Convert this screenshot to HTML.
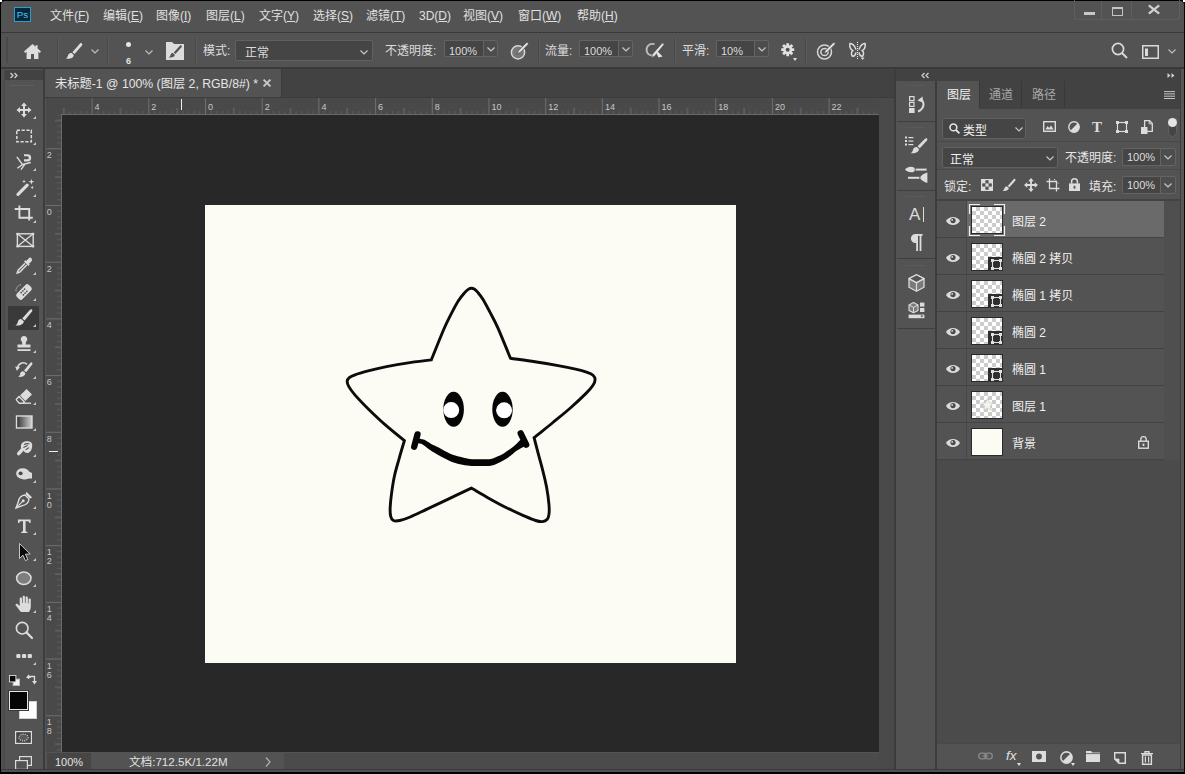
<!DOCTYPE html>
<html lang="zh-CN">
<head>
<meta charset="utf-8">
<title>Photoshop</title>
<style>
*{box-sizing:border-box;margin:0;padding:0}
html,body{width:1185px;height:774px;overflow:hidden;background:#000}
body{font-family:"Liberation Sans","Noto Sans CJK SC",sans-serif;font-size:12px;color:#dcdcdc;position:relative}
.abs{position:absolute}
#app{position:absolute;left:1px;top:1px;width:1183px;height:772px;background:#535353;border-radius:4px 4px 0 0;overflow:hidden}
.t{position:absolute;white-space:nowrap;line-height:16px}
.ln{position:absolute;background:#383838}
svg{position:absolute;overflow:visible}
.sep{position:absolute;top:5px;width:2px;height:25px;background:#484848;border-right:1px solid #5c5c5c}
.dd{position:absolute;background:#454545;border:1px solid #616161;border-radius:2px}
.inp{position:absolute;background:#454545;border:1px solid #636363;border-right:none;border-radius:2px 0 0 2px}
.chv{position:absolute;background:#4d4d4d;border:1px solid #636363;border-radius:0 2px 2px 0}
.n{font-size:11px}
.m{top:7px;font-size:12px;color:#e0e0e0}
.m u{text-decoration-thickness:1px;text-underline-offset:1px}
</style>
</head>
<body>
<div class="abs" style="left:0;top:0;width:2px;height:2px;background:#fff"></div><div class="abs" style="left:1183px;top:0;width:2px;height:2px;background:#fff"></div>
<div id="app"><div class="abs" style="left:0;top:68px;width:4px;height:704px;background:#505050;border-right:1px solid #484848"></div></div>

<!-- MENU BAR -->
<div id="menubar" class="abs" style="left:3px;top:1px;width:1180px;height:31px">
  <svg style="left:11px;top:6px" width="17" height="15" viewBox="0 0 18 16"><rect x="0.5" y="0.5" width="17" height="15" fill="#07283b" stroke="#2fa3d6" stroke-width="1"/><text x="9" y="12" font-family="Liberation Sans, sans-serif" font-size="10.5" fill="#4cc4ec" text-anchor="middle">Ps</text></svg>
  <span class="t m" style="left:47px">文件(<u>F</u>)</span>
  <span class="t m" style="left:100px">编辑(<u>E</u>)</span>
  <span class="t m" style="left:153px">图像(<u>I</u>)</span>
  <span class="t m" style="left:203px">图层(<u>L</u>)</span>
  <span class="t m" style="left:256px">文字(<u>Y</u>)</span>
  <span class="t m" style="left:310px">选择(<u>S</u>)</span>
  <span class="t m" style="left:363px">滤镜(<u>T</u>)</span>
  <span class="t m" style="left:416px">3D(<u>D</u>)</span>
  <span class="t m" style="left:460px">视图(<u>V</u>)</span>
  <span class="t m" style="left:515px">窗口(<u>W</u>)</span>
  <span class="t m" style="left:574px">帮助(<u>H</u>)</span>
  <!-- window controls -->
  <div class="abs" style="left:1071px;top:-1px;width:106px;height:20px;border:1px solid #5e5e5e;border-top:none;border-radius:0 0 3px 3px"></div>
  <div class="abs" style="left:1098px;top:0;width:1px;height:18px;background:#5e5e5e"></div>
  <div class="abs" style="left:1128px;top:0;width:1px;height:18px;background:#5e5e5e"></div>
  <div class="abs" style="left:1081px;top:11px;width:11px;height:3px;background:#c8c8c8"></div>
  <div class="abs" style="left:1109px;top:6px;width:11px;height:9px;border:1.6px solid #c4c4c4;border-top-width:2px"></div>
  <svg style="left:1145px;top:4px" width="12" height="9" viewBox="0 0 12 9"><path d="M0.8 0.4 L11.2 8.6 M11.2 0.4 L0.8 8.6" stroke="#cfcfcf" stroke-width="2.3" fill="none"/></svg>
</div>
<div class="ln" style="left:1px;top:32px;width:1183px;height:1px;background:#3a3a3a"></div>
<!-- OPTIONS BAR -->
<div id="optbar" class="abs" style="left:3px;top:33px;width:1180px;height:35px">
  <!-- coordinates here: x = abs-3, y = abs-33 -->
  <div class="abs" style="left:3px;top:4px;width:2px;height:26px;background:#4a4a4a"></div>
  <!-- home -->
  <svg style="left:21px;top:11px" width="17" height="15" viewBox="0 0 17 15"><path d="M8.5 0 L0 7.6 L1.2 8.9 L2.6 7.7 V15 H7 V10 H10 V15 H14.4 V7.7 L15.8 8.9 L17 7.6 L13.6 4.5 V1.2 H11.6 V2.8 Z" fill="#dedede"/></svg>
  <div class="sep" style="left:54px"></div>
  <!-- brush -->
  <svg style="left:62px;top:10px" width="18" height="16" viewBox="0 0 18 16"><path d="M16.6 0.2 C17.6 0.6 17.6 1.6 17 2.4 L9.6 11 L7.4 9.2 L15 0.6 C15.5 0.1 16.1 0 16.6 0.2 Z M6.6 10 L8.8 11.9 C8.6 14.4 6 16.2 0.6 15.6 C2.8 14.6 2.6 13.2 3.4 11.6 C4.1 10.2 5.5 9.6 6.6 10 Z" fill="#dedede"/></svg>
  <svg style="left:88px;top:16px" width="8" height="5" viewBox="0 0 8 5"><path d="M0.5 0.5 L4 4 L7.5 0.5" stroke="#bdbdbd" stroke-width="1.2" fill="none"/></svg>
  <div class="sep" style="left:104px"></div>
  <div class="abs" style="left:123px;top:9px;width:5px;height:5px;border-radius:50%;background:#e6e6e6"></div>
  <span class="t" style="left:123px;top:21.8px;font-size:9px;line-height:12px;color:#e4e4e4;font-weight:bold">6</span>
  <svg style="left:141.5px;top:16.5px" width="8" height="5" viewBox="0 0 8 5"><path d="M0.5 0.5 L4 4 L7.5 0.5" stroke="#bdbdbd" stroke-width="1.2" fill="none"/></svg>
  <!-- brush settings panel icon -->
  <svg style="left:163px;top:9px" width="18" height="18" viewBox="0 0 18 18"><path d="M0 0 H6 L8 2 H18 V18 H0 Z" fill="#dcdcdc"/><path d="M15.2 3.4 C16 3.8 16 4.6 15.5 5.2 L9.4 12 L7.8 10.6 L13.9 3.7 C14.3 3.3 14.8 3.2 15.2 3.4 Z M7.2 11.2 L8.8 12.7 C8.6 14.6 6.6 15.8 2.6 15.4 C4.2 14.6 4.2 13.6 4.8 12.4 C5.3 11.4 6.4 10.9 7.2 11.2 Z" fill="#535353"/></svg>
  <div class="sep" style="left:192px"></div>
  <span class="t" style="left:200px;top:10px">模式:</span>
  <div class="dd" style="left:232px;top:7px;width:138px;height:21px"><span class="t" style="left:9px;top:4px">正常</span>
    <svg style="left:124px;top:9px" width="8" height="5" viewBox="0 0 8 5"><path d="M0.5 0.5 L4 4 L7.5 0.5" stroke="#c8c8c8" stroke-width="1.2" fill="none"/></svg></div>
  <span class="t" style="left:382px;top:10px">不透明度:</span>
  <div class="inp" style="left:441px;top:7px;width:40px;height:17px"><span class="t n" style="left:4px;top:2px">100%</span></div>
  <div class="chv" style="left:480px;top:7px;width:15px;height:17px"><svg style="left:3px;top:6px" width="8" height="5" viewBox="0 0 8 5"><path d="M0.5 0.5 L4 4 L7.5 0.5" stroke="#c8c8c8" stroke-width="1.2" fill="none"/></svg></div>
  <!-- pressure opacity -->
  <svg style="left:507px;top:9px" width="19" height="18" viewBox="0 0 19 18"><circle cx="8" cy="10.4" r="6.6" fill="#777" stroke="#d6d6d6" stroke-width="1.5"/><path d="M17.6 0.6 C18.6 1.2 18.4 2.2 17.8 2.8 L10.2 10.6 L7.2 11.8 L8.4 8.8 L16 1 C16.5 0.5 17.1 0.3 17.6 0.6 Z" fill="#e6e6e6" stroke="#535353" stroke-width="0.8"/></svg>
  <div class="sep" style="left:535px"></div>
  <span class="t" style="left:542px;top:10px">流量:</span>
  <div class="inp" style="left:576px;top:7px;width:40px;height:17px"><span class="t n" style="left:4px;top:2px">100%</span></div>
  <div class="chv" style="left:615px;top:7px;width:15px;height:17px"><svg style="left:3px;top:6px" width="8" height="5" viewBox="0 0 8 5"><path d="M0.5 0.5 L4 4 L7.5 0.5" stroke="#c8c8c8" stroke-width="1.2" fill="none"/></svg></div>
  <!-- airbrush -->
  <svg style="left:642px;top:9px" width="20" height="17" viewBox="0 0 20 17"><path d="M9.6 2.2 C5 0.8 1.2 4 1.6 8.4 C1.9 11.6 4.4 13.6 7 13.2" fill="none" stroke="#bdbdbd" stroke-width="1.9"/><path d="M18.3 1.2 C19.2 1.8 19 2.7 18.5 3.3 L9.6 14.2 L6.4 15.6 L7.4 12.2 L16.8 1.6 C17.3 1.1 17.8 0.9 18.3 1.2 Z" fill="#e4e4e4" stroke="#535353" stroke-width="0.7"/><path d="M12.6 9.4 L17.6 14.6 L13.4 15.6 L11.4 11 Z" fill="#e4e4e4"/></svg>
  <div class="sep" style="left:671px"></div>
  <span class="t" style="left:679px;top:10px">平滑:</span>
  <div class="inp" style="left:713px;top:7px;width:39px;height:17px"><span class="t n" style="left:4px;top:2px">10%</span></div>
  <div class="chv" style="left:751px;top:7px;width:15px;height:17px"><svg style="left:3px;top:6px" width="8" height="5" viewBox="0 0 8 5"><path d="M0.5 0.5 L4 4 L7.5 0.5" stroke="#c8c8c8" stroke-width="1.2" fill="none"/></svg></div>
  <!-- gear -->
  <svg style="left:777.8px;top:10.4px" width="13.4" height="13.4" viewBox="-8 -8 16 16"><g fill="#e0e0e0"><circle r="5.4"/><g id="gt"><rect x="-1.7" y="-7.8" width="3.4" height="15.6" rx="0.4"/></g><use href="#gt" transform="rotate(45)"/><use href="#gt" transform="rotate(90)"/><use href="#gt" transform="rotate(135)"/></g><circle r="2.4" fill="#535353"/></svg>
  <svg style="left:789.5px;top:24.5px" width="4" height="3" viewBox="0 0 4 3"><path d="M0 0 H4 L2 3 Z" fill="#e0e0e0"/></svg>
  <div class="sep" style="left:802px"></div>
  <!-- target pressure size -->
  <svg style="left:813px;top:9px" width="20" height="18" viewBox="0 0 20 18"><circle cx="8.5" cy="10" r="7" fill="none" stroke="#d6d6d6" stroke-width="1.5"/><circle cx="8.5" cy="10" r="3.6" fill="none" stroke="#d6d6d6" stroke-width="1.5"/><path d="M18.4 0.6 C19.4 1.2 19.2 2.2 18.6 2.8 L11 10.4 L8 11.6 L9.2 8.6 L16.8 1 C17.3 0.5 17.9 0.3 18.4 0.6 Z" fill="#e2e2e2" stroke="#535353" stroke-width="0.8"/></svg>
  <!-- butterfly -->
  <svg style="left:846px;top:9px" width="17" height="19" viewBox="0 0 17 19"><path d="M7 7.6 C5.8 3.4 3 1.2 0.9 1.6 C0.4 4.6 1.6 7.4 3.8 8.6 C2.2 9.8 2 12.4 3.2 14 C5.2 14.6 6.6 13 7 10.4 M10 7.6 C11.2 3.4 14 1.2 16.1 1.6 C16.6 4.6 15.4 7.4 13.2 8.6 C14.8 9.8 15 12.4 13.8 14 C11.8 14.6 10.4 13 10 10.4" fill="none" stroke="#dedede" stroke-width="1.5"/><path d="M8.5 0 V18" stroke="#ececec" stroke-width="1.1" stroke-dasharray="1 1"/><path d="M11.6 15.6 H15.6 L13.6 18 Z" fill="#dedede"/></svg>
  <!-- search -->
  <svg style="left:1108px;top:9px" width="17" height="17" viewBox="0 0 17 17"><circle cx="7" cy="7" r="5.6" fill="none" stroke="#dadada" stroke-width="1.7"/><path d="M11 11 L16 16" stroke="#dadada" stroke-width="2"/></svg>
  <!-- workspace -->
  <svg style="left:1139px;top:12px" width="17" height="14" viewBox="0 0 17 14"><rect x="0.75" y="0.75" width="15.5" height="12.5" fill="none" stroke="#dadada" stroke-width="1.5"/><rect x="3" y="3.5" width="3" height="7.5" fill="#dadada"/></svg>
  <svg style="left:1165px;top:16px" width="8" height="5" viewBox="0 0 8 5"><path d="M0.5 0.5 L4 4 L7.5 0.5" stroke="#bdbdbd" stroke-width="1.2" fill="none"/></svg>
</div>
<div class="ln" style="left:1px;top:67px;width:1183px;height:2px;background:#3a3a3a"></div>


<!-- LEFT TOOLBAR -->
<div id="tools" class="abs" style="left:5px;top:69px;width:38px;height:703px;background:#535353">
  <div class="abs" style="left:0;top:1px;width:38px;height:10px;background:#424242"></div>
  <svg style="left:5px;top:4px" width="8" height="5" viewBox="0 0 8 5"><path d="M0.5 0 L3 2.5 L0.5 5 M4.5 0 L7 2.5 L4.5 5" stroke="#d0d0d0" stroke-width="1.3" fill="none"/></svg>
  <div class="abs" style="left:5px;top:16px;width:24px;height:1px;background:#5e5e5e"></div>
  <div class="abs" style="left:3px;top:237px;width:31px;height:24px;background:#3a3a3a;border-radius:1px"></div>
  <!--TI_S--><svg style="left:8.5px;top:31px" width="20" height="20" viewBox="0 0 20 20"><path d="M10 2.5 L13 6 H11 V9 H14 V7 L17.5 10 L14 13 V11 H11 V14 H13 L10 17.5 L7 14 H9 V11 H6 V13 L2.5 10 L6 7 V9 H9 V6 H7 Z" fill="#dcdcdc"/></svg><svg style="left:28px;top:47px" width="3" height="3" viewBox="0 0 3 3"><path d="M3 0 V3 H0 Z" fill="#c8c8c8"/></svg><svg style="left:8.5px;top:57px" width="20" height="20" viewBox="0 0 20 20"><rect x="2.8" y="4.3" width="14.5" height="11.5" fill="none" stroke="#dcdcdc" stroke-width="1.5" stroke-dasharray="3.2 1.6"/></svg><svg style="left:28px;top:73px" width="3" height="3" viewBox="0 0 3 3"><path d="M3 0 V3 H0 Z" fill="#c8c8c8"/></svg><svg style="left:8.5px;top:83px" width="20" height="20" viewBox="0 0 20 20"><path d="M2.8 4.8 L8.5 12.5 L3.3 16.2 M8.5 12.5 L16.7 10.5 M6.9 17.7 L11.4 11.6" fill="none" stroke="#dcdcdc" stroke-width="1.4"/><path d="M10 2.2 H13.6 A3.6 3.6 0 0 1 13.6 9.4 H10 V7.3 H13.3 A1.5 1.5 0 0 0 13.3 4.3 H10 Z" fill="#dcdcdc"/></svg><svg style="left:28px;top:99px" width="3" height="3" viewBox="0 0 3 3"><path d="M3 0 V3 H0 Z" fill="#c8c8c8"/></svg><svg style="left:8.5px;top:109px" width="20" height="20" viewBox="0 0 20 20"><path d="M4 16.4 L13.2 7.2" stroke="#dcdcdc" stroke-width="3.2" stroke-linecap="round"/><path d="M17.4 0.8 L18.1 3.1 L20.4 3.8 L18.1 4.5 L17.4 6.8 L16.7 4.5 L14.4 3.8 L16.7 3.1 Z M10 1.6 L10.5 3.1 L12 3.6 L10.5 4.1 L10 5.6 L9.5 4.1 L8 3.6 L9.5 3.1 Z M18.2 7.6 L18.7 8.9 L20 9.4 L18.7 9.9 L18.2 11.2 L17.7 9.9 L16.4 9.4 L17.7 8.9 Z" fill="#dcdcdc"/></svg><svg style="left:28px;top:125px" width="3" height="3" viewBox="0 0 3 3"><path d="M3 0 V3 H0 Z" fill="#c8c8c8"/></svg><svg style="left:8.5px;top:135px" width="20" height="20" viewBox="0 0 20 20"><path d="M5.4 1.4 V13.8 H18.8 M0.7 5 H15.2 V16.4" fill="none" stroke="#dcdcdc" stroke-width="1.9"/></svg><svg style="left:28px;top:151px" width="3" height="3" viewBox="0 0 3 3"><path d="M3 0 V3 H0 Z" fill="#c8c8c8"/></svg><svg style="left:8.5px;top:161px" width="20" height="20" viewBox="0 0 20 20"><rect x="3.4" y="3.8" width="15.8" height="12.6" fill="none" stroke="#dcdcdc" stroke-width="1.4"/><path d="M3.4 3.8 L19.2 16.4 M19.2 3.8 L3.4 16.4" stroke="#dcdcdc" stroke-width="1.3"/><g fill="#dcdcdc"><rect x="2.4" y="2.8" width="2.2" height="2.2"/><rect x="18" y="2.8" width="2.2" height="2.2"/><rect x="2.4" y="15.2" width="2.2" height="2.2"/><rect x="18" y="15.2" width="2.2" height="2.2"/></g></svg><svg style="left:8.5px;top:187px" width="20" height="20" viewBox="0 0 20 20"><path d="M16.8 1.8 C18.2 2.8 18.4 4.4 17.4 5.4 L15 7.8 L15.8 8.6 L14.4 10 L10 5.6 L11.4 4.2 L12.2 5 L14.6 2.6 C15.3 1.6 16 1.4 16.8 1.8 Z" fill="#dcdcdc"/><path d="M11 7.4 L4 14.4 L3.2 17 L5.8 16 L12.8 9" fill="none" stroke="#dcdcdc" stroke-width="1.5"/></svg><svg style="left:28px;top:203px" width="3" height="3" viewBox="0 0 3 3"><path d="M3 0 V3 H0 Z" fill="#c8c8c8"/></svg><svg style="left:8.5px;top:213px" width="20" height="20" viewBox="0 0 20 20"><g transform="rotate(-45 10 10)"><rect x="1.5" y="6" width="17" height="8" rx="2.5" fill="#dcdcdc"/><g fill="#535353"><circle cx="7.6" cy="8.4" r="0.9"/><circle cx="10" cy="8.4" r="0.9"/><circle cx="12.4" cy="8.4" r="0.9"/><circle cx="7.6" cy="11.6" r="0.9"/><circle cx="10" cy="11.6" r="0.9"/><circle cx="12.4" cy="11.6" r="0.9"/></g></g><path d="M2 9 A6 6 0 0 1 8 2.6" fill="none" stroke="#dcdcdc" stroke-width="1" stroke-dasharray="1.2 1.2"/></svg><svg style="left:28px;top:229px" width="3" height="3" viewBox="0 0 3 3"><path d="M3 0 V3 H0 Z" fill="#c8c8c8"/></svg><svg style="left:8.5px;top:239px" width="20" height="20" viewBox="0 0 20 20"><path d="M17.6 1.2 C18.6 1.8 18.6 2.8 18 3.6 L10.6 12.4 L8.2 10.4 L16 1.8 C16.5 1.2 17.1 1 17.6 1.2 Z M7.4 11.2 L9.8 13.2 C9.6 16 6.6 18 1.4 17.4 C3.6 16.2 3.4 14.8 4.2 13 C4.9 11.5 6.3 10.8 7.4 11.2 Z" fill="#dcdcdc"/></svg><svg style="left:28px;top:255px" width="3" height="3" viewBox="0 0 3 3"><path d="M3 0 V3 H0 Z" fill="#c8c8c8"/></svg><svg style="left:8.5px;top:265px" width="20" height="20" viewBox="0 0 20 20"><path d="M10 2 A3.2 3.2 0 0 1 12.2 7.6 L11.6 10.4 H16.5 V13.6 H3.5 V10.4 H8.4 L7.8 7.6 A3.2 3.2 0 0 1 10 2 Z" fill="#dcdcdc"/><rect x="3.5" y="15.2" width="13" height="1.8" fill="#dcdcdc"/></svg><svg style="left:28px;top:281px" width="3" height="3" viewBox="0 0 3 3"><path d="M3 0 V3 H0 Z" fill="#c8c8c8"/></svg><svg style="left:8.5px;top:291px" width="20" height="20" viewBox="0 0 20 20"><path d="M17.8 2.4 C18.8 3 18.6 4 18 4.8 L12.2 12.2 L10 10.4 L16.2 3 C16.7 2.4 17.3 2.2 17.8 2.4 Z M9.2 11.2 L11.4 13 C11.2 15.6 8.6 17.4 4.2 17 C6 15.8 5.8 14.6 6.4 13 C7 11.6 8.2 10.9 9.2 11.2 Z" fill="#dcdcdc"/><path d="M3.6 8.2 A5.6 5.6 0 0 1 13 4.4" fill="none" stroke="#dcdcdc" stroke-width="1.5"/><path d="M1.2 6.4 L6 7.2 L2.8 10.8 Z" fill="#dcdcdc"/></svg><svg style="left:28px;top:307px" width="3" height="3" viewBox="0 0 3 3"><path d="M3 0 V3 H0 Z" fill="#c8c8c8"/></svg><svg style="left:8.5px;top:317px" width="20" height="20" viewBox="0 0 20 20"><path d="M12.6 3 L18 8.4 L11.4 15 L6 9.6 Z" fill="#dcdcdc"/><path d="M5 10.6 L10.4 16 L9 17.2 H5.4 L2.6 14.4 C2.2 13.8 2.2 13.4 2.6 13 Z" fill="none" stroke="#dcdcdc" stroke-width="1.4"/><path d="M9 17.2 H17" stroke="#dcdcdc" stroke-width="1.4"/></svg><svg style="left:28px;top:333px" width="3" height="3" viewBox="0 0 3 3"><path d="M3 0 V3 H0 Z" fill="#c8c8c8"/></svg><svg style="left:8.5px;top:343px" width="20" height="20" viewBox="0 0 20 20"><defs><linearGradient id="gg" x1="0" x2="1"><stop offset="0" stop-color="#303030"/><stop offset="1" stop-color="#d4d4d4"/></linearGradient></defs><rect x="2.5" y="4" width="15.5" height="12" fill="url(#gg)" stroke="#dcdcdc" stroke-width="1.4"/></svg><svg style="left:28px;top:359px" width="3" height="3" viewBox="0 0 3 3"><path d="M3 0 V3 H0 Z" fill="#c8c8c8"/></svg><svg style="left:8.5px;top:369px" width="20" height="20" viewBox="0 0 20 20"><path d="M3.2 16.6 C2.6 15.4 3.2 14.4 4.2 13.4 L7.2 10.2 C6.2 7.6 7.4 4.8 10.2 3.8 C12.6 3 15.6 3.2 17.2 4.6 C18.4 5.8 18.4 7.6 18 9.4 C17.6 11.4 16.8 13.4 15 14.4 C13.6 15.2 12 15 10.8 14.2 L9.6 12.8 L6 16.8 C5 17.8 3.8 17.6 3.2 16.6 Z" fill="#dcdcdc"/><path d="M10 6.6 C11.6 5.6 13.6 5.4 15.4 6 M9.4 9.6 L13.6 7.4 M11.6 11.8 L15 9.6" stroke="#535353" stroke-width="1.1" fill="none"/></svg><svg style="left:28px;top:385px" width="3" height="3" viewBox="0 0 3 3"><path d="M3 0 V3 H0 Z" fill="#c8c8c8"/></svg><svg style="left:8.5px;top:395px" width="20" height="20" viewBox="0 0 20 20"><path d="M8.2 4.2 C11.6 4 14.2 5.4 15 7.6 L18 9 V14.6 H15.4 C13.6 15.4 11 15.6 8.6 15.2 C4.8 14.6 2.2 12.6 2.2 9.6 C2.2 6.6 4.6 4.4 8.2 4.2 Z" fill="#dcdcdc"/><ellipse cx="6.6" cy="9.4" rx="2.1" ry="1.8" fill="#4a4a4a"/></svg><svg style="left:28px;top:411px" width="3" height="3" viewBox="0 0 3 3"><path d="M3 0 V3 H0 Z" fill="#c8c8c8"/></svg><svg style="left:8.5px;top:421px" width="20" height="20" viewBox="0 0 20 20"><path d="M12.4 1.8 L18.2 7.6 L15.8 8.4 L11.6 4.2 Z" fill="#dcdcdc"/><path d="M11 5 L15 9 C14.6 12.6 12 15 8.4 15.6 L2 18 L4.4 11.6 C5 8 7.4 5.4 11 5 Z" fill="none" stroke="#dcdcdc" stroke-width="1.4"/><path d="M2.4 17.6 L8.6 11.4" stroke="#dcdcdc" stroke-width="1.2"/><circle cx="9.2" cy="10.8" r="1.5" fill="#dcdcdc"/></svg><svg style="left:28px;top:437px" width="3" height="3" viewBox="0 0 3 3"><path d="M3 0 V3 H0 Z" fill="#c8c8c8"/></svg><svg style="left:8.5px;top:447px" width="20" height="20" viewBox="0 0 20 20"><path d="M4 3.5 H16.6 V7 H15.3 C15.1 5.7 14.6 5.2 13.3 5.2 H11.6 V14.6 C11.6 15.5 12.1 15.8 13.4 15.9 V17 H7.2 V15.9 C8.5 15.8 9 15.5 9 14.6 V5.2 H7.3 C6 5.2 5.5 5.7 5.3 7 H4 Z" fill="#dcdcdc"/></svg><svg style="left:28px;top:463px" width="3" height="3" viewBox="0 0 3 3"><path d="M3 0 V3 H0 Z" fill="#c8c8c8"/></svg><svg style="left:8.5px;top:473px" width="20" height="20" viewBox="0 0 20 20"><path d="M5.5 1.5 V16.5 L9 13.2 L11.4 18.6 L13.8 17.5 L11.4 12.2 L16.2 12 Z" fill="#0a0a0a" stroke="#d8d8d8" stroke-width="0.9" stroke-linejoin="round"/></svg><svg style="left:28px;top:489px" width="3" height="3" viewBox="0 0 3 3"><path d="M3 0 V3 H0 Z" fill="#c8c8c8"/></svg><svg style="left:8.5px;top:499px" width="20" height="20" viewBox="0 0 20 20"><ellipse cx="9.8" cy="10.2" rx="7.2" ry="6.2" fill="#7e7e7e" stroke="#dcdcdc" stroke-width="1.5"/></svg><svg style="left:28px;top:515px" width="3" height="3" viewBox="0 0 3 3"><path d="M3 0 V3 H0 Z" fill="#c8c8c8"/></svg><svg style="left:8.5px;top:525px" width="20" height="20" viewBox="0 0 20 20"><path transform="translate(-0.6 0) scale(1.13 1)" d="M6.6 18 C5 15.4 3.4 13.4 2 11.2 C1.4 10.2 2.6 9.2 3.6 10 L5.6 12 V4.6 C5.6 3.2 7.6 3.2 7.6 4.6 V9 H8.2 V2.8 C8.2 1.4 10.2 1.4 10.2 2.8 V9 H10.8 V3.6 C10.8 2.2 12.8 2.2 12.8 3.6 V9.6 H13.4 V5.6 C13.4 4.2 15.4 4.2 15.4 5.6 V12.6 C15.4 15 14.6 16.6 13.8 18 Z" fill="#dcdcdc"/></svg><svg style="left:28px;top:541px" width="3" height="3" viewBox="0 0 3 3"><path d="M3 0 V3 H0 Z" fill="#c8c8c8"/></svg><svg style="left:8.5px;top:551px" width="20" height="20" viewBox="0 0 20 20"><circle cx="8.2" cy="8.2" r="5.8" fill="none" stroke="#dcdcdc" stroke-width="1.6"/><path d="M12.4 12.4 L18 18" stroke="#dcdcdc" stroke-width="2.2" stroke-linecap="round"/></svg><svg style="left:8.5px;top:577px" width="20" height="20" viewBox="0 0 20 20"><rect x="2.3" y="7.9" width="4.2" height="4.2" rx="1.2" fill="#dcdcdc"/><rect x="8" y="7.9" width="4.2" height="4.2" rx="1.2" fill="#dcdcdc"/><rect x="13.7" y="7.9" width="4.2" height="4.2" rx="1.2" fill="#dcdcdc"/></svg><svg style="left:28px;top:593px" width="3" height="3" viewBox="0 0 3 3"><path d="M3 0 V3 H0 Z" fill="#c8c8c8"/></svg>
<svg style="left:4px;top:606px" width="11" height="11" viewBox="0 0 12 12"><rect x="4.5" y="4.5" width="7" height="7" fill="#f4f4f4" stroke="#bdbdbd" stroke-width="1"/><rect x="0.5" y="0.5" width="7" height="7" fill="#0a0a0a" stroke="#d8d8d8" stroke-width="1"/></svg>
<svg style="left:21px;top:605px" width="11" height="11" viewBox="0 0 11 11"><path d="M2.5 5 V2.5 H8.5 V8" fill="none" stroke="#dcdcdc" stroke-width="1.3"/><path d="M0 4 L2.5 0.5 L5 4 Z M6 7 L8.5 10.5 L11 7 Z" fill="#dcdcdc" transform="translate(0,0)"/></svg>
<div class="abs" style="left:14px;top:632px;width:18px;height:18px;background:#fdfdfd;border:1px solid #d0d0d0"></div>
<div class="abs" style="left:4px;top:622px;width:19px;height:19px;background:#050505;border:1px solid #e4e4e4;box-shadow:0 0 0 1px #3a3a3a"></div>
<svg style="left:10px;top:662px" width="17" height="13" viewBox="0 0 17 13"><rect x="0.6" y="0.6" width="15.8" height="11.8" fill="#444" stroke="#dcdcdc" stroke-width="1.2"/><ellipse cx="8.5" cy="6.5" rx="4.6" ry="3.4" fill="#5a5a5a" stroke="#dcdcdc" stroke-width="1.1" stroke-dasharray="1 1.2"/></svg>
<svg style="left:10px;top:687px" width="17" height="14" viewBox="0 0 17 14"><rect x="4.6" y="0.6" width="11.8" height="8.8" fill="#535353" stroke="#dcdcdc" stroke-width="1.2"/><rect x="0.6" y="4.6" width="11.8" height="8.8" fill="#535353" stroke="#dcdcdc" stroke-width="1.2"/></svg>
<!--TI_E-->
</div>
<div class="ln" style="left:43px;top:69px;width:2px;height:703px;background:#3c3c3c"></div>
<!-- DOC TAB BAR -->
<div id="tabbar" class="abs" style="left:45px;top:69px;width:849px;height:28px;background:#424242">
  <div class="abs" style="left:0;top:0;width:237px;height:28px;background:#535353;border-right:1px solid #3c3c3c"></div>
  <span class="t" style="left:10px;top:7px;font-size:12.25px;color:#e6e6e6">未标题-1 @ 100% (图层 2, RGB/8#) *</span>
  <svg style="left:218px;top:10px" width="8" height="8" viewBox="0 0 8 8"><path d="M0.6 0.6 L7.4 7.4 M7.4 0.6 L0.6 7.4" stroke="#c8c8c8" stroke-width="2" fill="none"/></svg>
</div>
<div class="ln" style="left:45px;top:97px;width:849px;height:1px;background:#3c3c3c"></div>
<!-- RULERS -->
<svg id="hruler" style="left:46px;top:98px" width="833" height="17" viewBox="0 0 833 17">
  <defs><pattern id="hp" x="159" y="0" width="56.693" height="17" patternUnits="userSpaceOnUse">
    <g stroke="#6e6e6e" stroke-width="1">
    <line x1="0.5" y1="0" x2="0.5" y2="17"/>
    <line x1="28.85" y1="10" x2="28.85" y2="17"/>
    <line x1="6.17" y1="13" x2="6.17" y2="17" stroke="#5c5c5c"/><line x1="11.84" y1="13" x2="11.84" y2="17" stroke="#5c5c5c"/><line x1="17.51" y1="13" x2="17.51" y2="17" stroke="#5c5c5c"/><line x1="23.18" y1="13" x2="23.18" y2="17" stroke="#5c5c5c"/><line x1="34.52" y1="13" x2="34.52" y2="17" stroke="#5c5c5c"/><line x1="40.19" y1="13" x2="40.19" y2="17" stroke="#5c5c5c"/><line x1="45.85" y1="13" x2="45.85" y2="17" stroke="#5c5c5c"/><line x1="51.52" y1="13" x2="51.52" y2="17" stroke="#5c5c5c"/>
    </g></pattern></defs>
  <rect width="833" height="17" fill="#494949"/>
  <rect x="16" width="817" height="17" fill="url(#hp)"/>
  <rect x="0" y="16" width="833" height="1" fill="#6a6a6a"/>
  <g font-family="Liberation Sans, sans-serif" font-size="9" fill="#c8c8c8"><text x="48.6" y="12.3">4</text><text x="105.3" y="12.3">2</text><text x="162.0" y="12.3">0</text><text x="218.7" y="12.3">2</text><text x="275.4" y="12.3">4</text><text x="332.1" y="12.3">6</text><text x="388.8" y="12.3">8</text><text x="445.5" y="12.3">10</text><text x="502.2" y="12.3">12</text><text x="558.9" y="12.3">14</text><text x="615.5" y="12.3">16</text><text x="672.2" y="12.3">18</text><text x="728.9" y="12.3">20</text><text x="785.6" y="12.3">22</text></g>
  <rect x="135" y="1" width="1" height="11" fill="#f0f0f0"/>
</svg>
<svg id="vruler" style="left:46px;top:114px" width="16" height="638" viewBox="0 0 16 638">
  <defs><pattern id="vp" x="0" y="91" width="16" height="56.693" patternUnits="userSpaceOnUse">
    <g stroke="#6e6e6e" stroke-width="1">
    <line y1="0.5" x1="0" y2="0.5" x2="16"/>
    <line y1="28.85" x1="9" y2="28.85" x2="16"/>
    <line y1="6.17" x1="11" y2="6.17" x2="16" stroke="#5c5c5c"/><line y1="11.84" x1="11" y2="11.84" x2="16" stroke="#5c5c5c"/><line y1="17.51" x1="11" y2="17.51" x2="16" stroke="#5c5c5c"/><line y1="23.18" x1="11" y2="23.18" x2="16" stroke="#5c5c5c"/><line y1="34.52" x1="11" y2="34.52" x2="16" stroke="#5c5c5c"/><line y1="40.19" x1="11" y2="40.19" x2="16" stroke="#5c5c5c"/><line y1="45.85" x1="11" y2="45.85" x2="16" stroke="#5c5c5c"/><line y1="51.52" x1="11" y2="51.52" x2="16" stroke="#5c5c5c"/>
    </g></pattern></defs>
  <rect width="16" height="638" fill="#494949"/>
  <rect y="1" width="16" height="637" fill="url(#vp)"/>
  <rect x="15" y="0" width="1" height="638" fill="#6a6a6a"/>
  <g font-family="Liberation Sans, sans-serif" font-size="9" fill="#c8c8c8"><text x="0.8" y="44.3">2</text><text x="0.8" y="101.0">0</text><text x="0.8" y="157.7">2</text><text x="0.8" y="214.4">4</text><text x="0.8" y="271.1">6</text><text x="0.8" y="327.8">8</text><text x="0.8" y="384.5">1</text><text x="0.8" y="393.5">0</text><text x="0.8" y="441.2">1</text><text x="0.8" y="450.2">2</text><text x="0.8" y="497.9">1</text><text x="0.8" y="506.9">4</text><text x="0.8" y="554.5">1</text><text x="0.8" y="563.5">6</text><text x="0.8" y="611.2">1</text><text x="0.8" y="620.2">8</text></g>
  <rect x="3" y="337" width="9" height="1" fill="#f0f0f0"/>
</svg>
<!-- CANVAS -->
<div id="paste" class="abs" style="left:62px;top:115px;width:817px;height:637px;background:#282828"></div>
<div id="doc" class="abs" style="left:205px;top:205px;width:531px;height:458px;background:#fcfcf5"></div>
<!--STAR_S--><svg id="star" style="left:0;top:0" width="1185" height="774" viewBox="0 0 1185 774">
<path d="M431.3 359.9C433.4 354.8 440.6 336.8 443.8 329.3C447.1 321.8 448.4 319.5 450.8 314.7C453.2 309.9 456.0 304.4 458.4 300.7C460.8 297.0 463.3 294.3 464.9 292.4C466.5 290.5 467.1 290.1 468.2 289.4C469.3 288.7 470.3 288.3 471.4 288.3C472.5 288.3 473.6 288.7 474.6 289.3C475.6 289.9 476.2 290.5 477.6 292.2C479.0 293.9 480.9 296.0 482.9 299.3C484.9 302.6 487.2 307.0 489.8 311.9C492.4 316.8 494.8 320.9 498.2 328.6C501.6 336.3 508.4 353.4 510.5 358.3C514.6 358.9 527.0 360.5 534.9 361.7C542.8 362.9 551.3 364.4 558.1 365.7C564.9 366.9 570.8 368.1 575.6 369.2C580.5 370.3 584.3 371.4 587.2 372.4C590.1 373.4 591.7 374.1 593.0 375.3C594.3 376.5 595.1 377.8 595.1 379.4C595.1 381.0 594.5 382.9 593.0 385.2C591.5 387.5 589.9 389.5 586.0 393.4C582.1 397.3 575.4 403.6 569.8 408.5C564.2 413.4 558.2 418.1 552.3 423.0C546.3 427.9 537.1 435.2 534.1 437.7C534.7 440.1 536.5 447.0 537.9 452.4C539.3 457.8 541.1 464.1 542.6 469.9C544.1 475.7 545.5 481.5 546.6 487.3C547.7 493.1 548.6 500.3 549.0 504.8C549.4 509.3 549.3 511.7 549.0 514.1C548.7 516.5 548.3 518.0 547.2 519.3C546.1 520.5 544.5 521.4 542.6 521.6C540.7 521.8 538.7 521.5 535.6 520.5C532.5 519.5 528.9 517.9 524.0 515.8C519.1 513.7 512.3 510.6 506.5 507.7C500.7 504.8 495.0 501.7 489.1 498.4C483.2 495.1 474.3 489.8 471.3 488.1C467.7 489.8 457.3 494.8 449.8 498.4C442.3 501.9 433.1 506.3 426.5 509.4C419.9 512.5 414.6 515.1 410.2 517.0C405.8 518.9 402.6 519.9 399.8 520.5C397.0 521.1 394.9 521.2 393.4 520.5C391.9 519.8 391.2 518.6 390.7 516.4C390.2 514.2 390.0 511.0 390.2 507.1C390.4 503.2 390.9 498.3 391.6 493.1C392.3 487.9 393.2 481.5 394.5 475.7C395.8 469.9 397.6 464.1 399.2 458.3C400.8 452.5 403.5 443.6 404.4 440.6C401.4 438.2 392.4 431.0 386.5 425.9C380.6 420.8 374.3 414.8 369.1 409.7C363.9 404.6 358.5 399.0 355.1 395.1C351.7 391.2 350.0 388.7 348.7 386.4C347.4 384.1 347.1 382.6 347.2 381.2C347.3 379.8 348.0 378.8 349.3 377.7C350.6 376.6 351.8 376.0 355.1 374.8C358.4 373.6 363.9 372.1 369.1 370.7C374.3 369.3 379.7 368.0 386.5 366.6C393.3 365.2 402.3 363.7 409.8 362.6C417.3 361.5 427.7 360.3 431.3 359.9Z" fill="none" stroke="#0c0c0c" stroke-width="2.9" stroke-linejoin="miter"/>
<ellipse cx="453.6" cy="409.3" rx="10.3" ry="17.5" fill="#050505"/><circle cx="451.2" cy="410.1" r="8" fill="#ffffff"/>
<ellipse cx="502.5" cy="409.3" rx="10.2" ry="17.5" fill="#050505"/><circle cx="504.1" cy="410.3" r="8" fill="#ffffff"/>
<path d="M417.5 438.2C418.1 438.3 420.0 438.6 421.1 438.9C422.2 439.2 422.8 439.0 424.4 439.8C426.0 440.6 428.4 442.4 430.8 443.7C433.2 445.0 435.5 445.9 438.7 447.6C441.9 449.3 446.6 452.2 450.2 453.7C453.8 455.2 456.8 455.9 460.0 456.8C463.2 457.7 466.6 458.5 469.6 458.9C472.6 459.3 474.4 459.2 477.9 459.2C481.4 459.2 487.6 459.3 490.8 458.9C494.0 458.5 495.2 457.5 497.3 456.6C499.4 455.7 501.6 454.7 503.7 453.4C505.8 452.1 508.0 450.5 510.2 448.9C512.4 447.3 514.7 445.4 516.6 443.7C518.5 442.0 520.8 439.5 521.6 438.6L525.2 446.0C523.8 446.8 519.1 449.1 516.6 450.8C514.1 452.5 512.4 454.4 510.2 456.0C508.0 457.6 505.8 458.9 503.7 460.2C501.6 461.5 499.4 462.7 497.3 463.6C495.2 464.5 494.0 465.3 490.8 465.7C487.6 466.1 481.4 466.0 477.9 466.0C474.4 466.0 472.6 466.0 469.6 465.7C466.6 465.4 463.2 464.9 460.0 464.2C456.8 463.4 453.8 462.7 450.2 461.2C446.6 459.7 441.9 457.1 438.7 455.3C435.5 453.5 433.2 452.1 430.8 450.5C428.4 448.9 426.0 446.8 424.4 445.7C422.8 444.6 422.4 444.1 421.1 443.7C419.8 443.2 417.3 443.1 416.5 443.0Z" fill="#050505"/>
<path d="M417.5 434.4 L414.2 446.8" stroke="#050505" stroke-width="6.3" stroke-linecap="round"/>
<path d="M520.7 433.4 L526.2 444.6" stroke="#050505" stroke-width="6.3" stroke-linecap="round"/>
</svg><!--STAR_E-->
<!-- STATUS BAR -->
<div id="status" class="abs" style="left:46px;top:752px;width:833px;height:20px;background:#535353">
  <div class="abs" style="left:1px;top:1px;width:44px;height:16px;background:#464646"></div><div class="abs" style="left:238px;top:1px;width:595px;height:16px;background:#4b4b4b"></div>
  <span class="t" style="left:9px;top:2px;font-size:11px;color:#e2e2e2">100%</span>
  <span class="t" style="left:83px;top:2px;font-size:11.6px;color:#e2e2e2">文档:712.5K/1.22M</span>
  <svg style="left:219px;top:5px" width="6" height="10" viewBox="0 0 6 10"><path d="M1 0.5 L5 5 L1 9.5" stroke="#b0b0b0" stroke-width="1.2" fill="none"/></svg>
</div>
<!--R_S-->
<!-- RIGHT -->
<div class="abs" style="left:879px;top:98px;width:15px;height:674px;background:#4a4a4a"></div>
<div class="ln" style="left:894px;top:69px;width:2px;height:703px;background:#3c3c3c"></div>
<div class="abs" style="left:896px;top:69px;width:1284px;max-width:285px;height:12px;background:#424242"></div>
<svg style="left:921px;top:73px" width="8" height="5" viewBox="0 0 8 5"><path d="M3.5 0 L1 2.5 L3.5 5 M7.5 0 L5 2.5 L7.5 5" stroke="#d0d0d0" stroke-width="1.3" fill="none"/></svg>
<svg style="left:1167px;top:73px" width="8" height="5" viewBox="0 0 8 5"><path d="M0.5 0 L3.5 2.5 L0.5 5 Z M4.5 0 L7.5 2.5 L4.5 5 Z" fill="#d0d0d0"/></svg>

<div id="iconcol" class="abs" style="left:897px;top:81px;width:38px;height:691px;background:#535353">
<div class="abs" style="left:9px;top:4px;width:20px;height:1px;background:repeating-linear-gradient(90deg,#606060 0 1px,transparent 1px 2px)"></div><div class="abs" style="left:9px;top:46px;width:20px;height:1px;background:repeating-linear-gradient(90deg,#606060 0 1px,transparent 1px 2px)"></div><div class="abs" style="left:9px;top:115px;width:20px;height:1px;background:repeating-linear-gradient(90deg,#606060 0 1px,transparent 1px 2px)"></div><div class="abs" style="left:9px;top:184px;width:20px;height:1px;background:repeating-linear-gradient(90deg,#606060 0 1px,transparent 1px 2px)"></div>
<div class="abs" style="left:0;top:40px;width:38px;height:1px;background:#3e3e3e"></div>
<div class="abs" style="left:0;top:109px;width:38px;height:1px;background:#3e3e3e"></div>
<div class="abs" style="left:0;top:177px;width:38px;height:1px;background:#3e3e3e"></div>
<div class="abs" style="left:0;top:247px;width:38px;height:1px;background:#3e3e3e"></div>
<!-- history -->
<svg style="left:12px;top:15px" width="18" height="17" viewBox="0 0 18 17"><rect x="0.6" y="0.6" width="4.4" height="4" fill="none" stroke="#dcdcdc" stroke-width="1.2"/><rect x="0.6" y="6.4" width="4.4" height="4" fill="none" stroke="#dcdcdc" stroke-width="1.2"/><rect x="0" y="12" width="5.6" height="5" fill="#dcdcdc"/><path d="M9 15.5 C14 13.5 16.5 8 12.4 3.6" fill="none" stroke="#dcdcdc" stroke-width="2"/><path d="M8.4 4.4 L13.6 0.6 L14 6.6 Z" fill="#dcdcdc"/></svg>
<!-- brush settings -->
<svg style="left:8px;top:55px" width="23" height="18" viewBox="0 0 23 18"><g fill="#dcdcdc"><rect x="0" y="0.5" width="2" height="2"/><rect x="0" y="4" width="2" height="2"/><rect x="0" y="7.5" width="2" height="2"/><rect x="3.4" y="1" width="5" height="1.2"/><rect x="3.4" y="4.5" width="5" height="1.2"/><rect x="3.4" y="8" width="5" height="1.2"/></g><path d="M21.6 2.2 C22.6 2.8 22.6 3.8 22 4.6 L14.8 12.2 L12.6 10.2 L20 2.8 C20.5 2.2 21.1 2 21.6 2.2 Z M11.8 11 L14 13 C13.8 15.8 10.8 17.8 5.6 17.2 C7.8 16 7.6 14.6 8.4 12.8 C9.1 11.3 10.7 10.6 11.8 11 Z" fill="#dcdcdc"/></svg>
<!-- brushes -->
<svg style="left:8px;top:85px" width="23" height="17" viewBox="0 0 23 17"><path d="M0 3.6 C2.6 0.6 6.6 0 9.6 2 V5.2 C6.6 7.2 2.6 6.6 0 3.6 Z" fill="#dcdcdc"/><rect x="10.6" y="2.6" width="11" height="2" fill="#dcdcdc"/><path d="M22.4 6.6 V17 C19.4 16.4 16.8 14.4 15.4 12.8 V10.8 C16.8 9.2 19.4 7.2 22.4 6.6 Z" fill="#dcdcdc"/><rect x="3" y="10.8" width="11.4" height="2" fill="#dcdcdc"/></svg>
<!-- A| -->
<span class="t" style="left:12px;top:124px;font-size:17px;line-height:20px;color:#dcdcdc">A</span>
<div class="abs" style="left:26px;top:126px;width:1px;height:15px;background:#dcdcdc"></div>
<!-- pilcrow -->
<svg style="left:13px;top:153px" width="13" height="17" viewBox="0 0 13 17"><path d="M5.4 0 H12.6 V1.8 H11.4 V17 H9.6 V1.8 H8 V17 H6.2 V9 H5.4 A4.5 4.5 0 0 1 5.4 0 Z" fill="#dcdcdc"/></svg>
<!-- cube -->
<svg style="left:11px;top:193px" width="17" height="18" viewBox="0 0 17 18"><path d="M8.5 0.8 L16 4.6 V13.2 L8.5 17.2 L1 13.2 V4.6 Z" fill="#7a7a7a" stroke="#dcdcdc" stroke-width="1.3" stroke-linejoin="round"/><path d="M1 4.6 L8.5 8.6 L16 4.6 M8.5 8.6 V17.2" fill="none" stroke="#dcdcdc" stroke-width="1.2"/><path d="M1 4.6 L8.5 0.8 L16 4.6 L8.5 8.6 Z" fill="#535353" stroke="#dcdcdc" stroke-width="1.2" stroke-linejoin="round"/></svg>
<!-- materials -->
<svg style="left:11px;top:221px" width="17" height="17" viewBox="0 0 17 17"><path d="M5.5 0.6 L10 3 V8.4 L5.5 10.8 L1 8.4 V3 Z" fill="#7a7a7a" stroke="#dcdcdc" stroke-width="1.1" stroke-linejoin="round"/><path d="M1 3 L5.5 5.4 L10 3 M5.5 5.4 V10.8" fill="none" stroke="#dcdcdc" stroke-width="1"/><rect x="12" y="0.6" width="4.4" height="4" fill="#dcdcdc"/><rect x="12" y="6" width="4.4" height="4" fill="#dcdcdc"/><rect x="0.6" y="12.6" width="15.8" height="3.6" fill="#dcdcdc"/><path d="M12.4 13.4 H15.4 L13.9 15.4 Z" fill="#535353"/></svg>
</div>

<div class="ln" style="left:935px;top:81px;width:2px;height:691px;background:#3c3c3c"></div>
<div id="panel" class="abs" style="left:937px;top:81px;width:243px;height:691px;background:#4b4b4b">
  <!-- tabs -->
  <div class="abs" style="left:0;top:0;width:243px;height:28px;background:#424242"></div>
  <div class="abs" style="left:0;top:0;width:42px;height:28px;background:#535353"></div>
  <div class="abs" style="left:42px;top:0;width:1px;height:27px;background:#383838"></div>
  <div class="abs" style="left:84px;top:0;width:1px;height:27px;background:#383838"></div>
  <div class="abs" style="left:127px;top:0;width:1px;height:27px;background:#383838"></div>
  <span class="t" style="left:10px;top:6px;color:#f2f2f2">图层</span>
  <span class="t" style="left:52px;top:6px;color:#a8a8a8">通道</span>
  <span class="t" style="left:95px;top:6px;color:#a8a8a8">路径</span>
  <svg style="left:227px;top:10px" width="11" height="8" viewBox="0 0 11 8"><path d="M0 0.6 H11 M0 2.9 H11 M0 5.2 H11 M0 7.5 H11" stroke="#c4c4c4" stroke-width="1"/></svg>
  <!-- controls bg -->
  <div class="abs" style="left:0;top:28px;width:243px;height:92px;background:#535353"></div>
  <div class="abs" style="left:0;top:60px;width:243px;height:1px;background:#484848"></div>
  <div class="abs" style="left:0;top:88px;width:243px;height:1px;background:#484848"></div>
  <div class="abs" style="left:0;top:118px;width:243px;height:2px;background:#434343"></div>
  <!-- search dd -->
  <div class="dd" style="left:5px;top:37px;width:84px;height:21px"></div>
  <svg style="left:12px;top:42px" width="11" height="11" viewBox="0 0 11 11"><circle cx="4.4" cy="4.4" r="3.4" fill="none" stroke="#e6e6e6" stroke-width="1.6"/><path d="M7 7 L10.4 10.4" stroke="#e6e6e6" stroke-width="1.8"/></svg>
  <span class="t" style="left:26px;top:41.5px;color:#f0f0f0">类型</span>
  <svg style="left:78px;top:46px" width="8" height="5" viewBox="0 0 8 5"><path d="M0.5 0.5 L4 4 L7.5 0.5" stroke="#c8c8c8" stroke-width="1.2" fill="none"/></svg>
  
<svg style="left:106px;top:40px" width="13" height="11" viewBox="0 0 13 11"><rect x="0.7" y="0.7" width="11.6" height="9.6" fill="none" stroke="#dcdcdc" stroke-width="1.4"/><path d="M2.4 8.4 L4.6 5 L6.2 7 L8 4.6 L10.6 8.4 Z" fill="#dcdcdc"/></svg>
<svg style="left:131px;top:40px" width="12" height="12" viewBox="0 0 12 12"><circle cx="6" cy="6" r="5.2" fill="none" stroke="#dcdcdc" stroke-width="1.4"/><path d="M2.3 9.7 A5.2 5.2 0 0 0 9.7 2.3 Z" fill="#dcdcdc"/></svg>
<span class="t" style="left:155px;top:36px;font-family:'Liberation Serif',serif;font-weight:bold;font-size:15px;line-height:20px;color:#dcdcdc">T</span>
<svg style="left:179px;top:40px" width="12" height="12" viewBox="0 0 12 12"><rect x="1.5" y="1.5" width="9" height="9" fill="none" stroke="#dcdcdc" stroke-width="1.2"/><g fill="#dcdcdc"><rect width="3" height="3"/><rect x="9" width="3" height="3"/><rect y="9" width="3" height="3"/><rect x="9" y="9" width="3" height="3"/></g></svg>
<svg style="left:204px;top:39px" width="12" height="14" viewBox="0 0 12 14"><path d="M3.6 0.7 H8.6 L11.3 3.4 V11.4 H3.6 Z" fill="none" stroke="#dcdcdc" stroke-width="1.3"/><path d="M8.2 0.7 V3.8 H11.3" fill="none" stroke="#dcdcdc" stroke-width="1"/><rect x="0" y="7" width="6.5" height="7" fill="#dcdcdc"/></svg>
<div class="abs" style="left:231px;top:38px;width:9px;height:18px;border-radius:5px;background:#454545;border:1px solid #606060"></div>
<div class="abs" style="left:231px;top:37px;width:9px;height:9px;border-radius:50%;background:#e4e4e4"></div>

  <!-- blend dd -->
  <div class="dd" style="left:5px;top:66px;width:116px;height:21px"></div>
  <span class="t" style="left:13px;top:70.5px;color:#f0f0f0">正常</span>
  <svg style="left:109px;top:75px" width="8" height="5" viewBox="0 0 8 5"><path d="M0.5 0.5 L4 4 L7.5 0.5" stroke="#c8c8c8" stroke-width="1.2" fill="none"/></svg>
  <span class="t" style="left:128px;top:69px;color:#e6e6e6">不透明度:</span>
  <div class="inp" style="left:185px;top:67px;width:39px;height:18px"><span class="t n" style="left:4px;top:0px">100%</span></div>
  <div class="chv" style="left:223px;top:67px;width:16px;height:18px"><svg style="left:3px;top:6px" width="8" height="5" viewBox="0 0 8 5"><path d="M0.5 0.5 L4 4 L7.5 0.5" stroke="#c8c8c8" stroke-width="1.2" fill="none"/></svg></div>
  
<span class="t" style="left:7px;top:98px;color:#e6e6e6">锁定:</span>
<svg style="left:44px;top:98px" width="12" height="12" viewBox="0 0 12 12"><rect x="0.6" y="0.6" width="10.8" height="10.8" fill="none" stroke="#dcdcdc" stroke-width="1.2"/><g fill="#dcdcdc"><rect x="1" y="1" width="3.4" height="3.4"/><rect x="7.6" y="1" width="3.4" height="3.4"/><rect x="4.4" y="4.4" width="3.2" height="3.2"/><rect x="1" y="7.6" width="3.4" height="3.4"/><rect x="7.6" y="7.6" width="3.4" height="3.4"/></g></svg>
<svg style="left:65px;top:97px" width="14" height="14" viewBox="0 0 18 16"><path d="M16.6 0.2 C17.6 0.6 17.6 1.6 17 2.4 L9.6 11 L7.4 9.2 L15 0.6 C15.5 0.1 16.1 0 16.6 0.2 Z M6.6 10 L8.8 11.9 C8.6 14.4 6 16.2 0.6 15.6 C2.8 14.6 2.6 13.2 3.4 11.6 C4.1 10.2 5.5 9.6 6.6 10 Z" fill="#dcdcdc"/></svg>
<svg style="left:87px;top:97px" width="14" height="14" viewBox="2.5 2.5 15 15"><path d="M10 2.5 L13 6 H11 V9 H14 V7 L17.5 10 L14 13 V11 H11 V14 H13 L10 17.5 L7 14 H9 V11 H6 V13 L2.5 10 L6 7 V9 H9 V6 H7 Z" fill="#dcdcdc"/></svg>
<svg style="left:109px;top:97px" width="14" height="14" viewBox="0 0 14 14"><path d="M3.5 0.5 V10.5 H13.5 M0.5 3.5 H10.5 V13.5" fill="none" stroke="#dcdcdc" stroke-width="1.3"/><path d="M8 1 L12.5 5.5" stroke="#dcdcdc" stroke-width="1" stroke-dasharray="1.5 1"/></svg>
<svg style="left:132px;top:97px" width="11" height="13" viewBox="0 0 11 13"><rect x="0" y="5.4" width="11" height="7.6" fill="#dcdcdc"/><path d="M2.6 5.4 V3.6 A2.9 2.9 0 0 1 8.4 3.6 V5.4" fill="none" stroke="#dcdcdc" stroke-width="1.5"/><rect x="4.6" y="7.8" width="1.8" height="2.8" fill="#535353"/></svg>
<span class="t" style="left:152px;top:98px;color:#e6e6e6">填充:</span>
<div class="inp" style="left:185px;top:95px;width:39px;height:18px"><span class="t n" style="left:4px;top:0px">100%</span></div>
<div class="chv" style="left:223px;top:95px;width:16px;height:18px"><svg style="left:3px;top:6px" width="8" height="5" viewBox="0 0 8 5"><path d="M0.5 0.5 L4 4 L7.5 0.5" stroke="#c8c8c8" stroke-width="1.2" fill="none"/></svg></div>

  <!-- layers -->
  <div class="abs" style="left:0;top:120px;width:227px;height:36px;background:#535353"></div><div class="abs" style="left:30px;top:120px;width:197px;height:36px;background:#6a6a6a"></div><div class="abs" style="left:29px;top:120px;width:1px;height:36px;background:#474747"></div><div class="abs" style="left:0;top:156px;width:227px;height:1px;background:#434343"></div><svg style="left:9px;top:135px" width="14" height="10" viewBox="0 0 14 9.4"><path d="M0 4.7 C3 -0.6 11 -0.6 14 4.7 C11 10 3 10 0 4.7 Z" fill="#dcdcdc"/><circle cx="7" cy="4.3" r="2.6" fill="#4a4a4a"/><circle cx="6.2" cy="3.6" r="0.9" fill="#dcdcdc"/></svg><div class="abs" style="left:35px;top:126px;width:30px;height:26px;background-color:#fff;background-image:linear-gradient(45deg,#ccc 25%,transparent 25%,transparent 75%,#ccc 75%),linear-gradient(45deg,#ccc 25%,transparent 25%,transparent 75%,#ccc 75%);background-size:8px 8px;background-position:0 0,4px 4px;box-shadow:0 0 0 1px #2a2a2a"></div><svg style="left:32px;top:123px" width="36" height="32" viewBox="0 0 36 32"><path d="M0.5 10 V0.5 H11 M25 0.5 H35.5 V10 M35.5 22 V31.5 H25 M11 31.5 H0.5 V22" fill="none" stroke="#f0f0f0" stroke-width="1.2"/></svg><span class="t" style="left:75px;top:133px;color:#f0f0f0">图层 2</span><div class="abs" style="left:0;top:157px;width:227px;height:36px;background:#535353"></div><div class="abs" style="left:30px;top:157px;width:197px;height:36px;background:#535353"></div><div class="abs" style="left:29px;top:157px;width:1px;height:36px;background:#474747"></div><div class="abs" style="left:0;top:193px;width:227px;height:1px;background:#434343"></div><svg style="left:9px;top:172px" width="14" height="10" viewBox="0 0 14 9.4"><path d="M0 4.7 C3 -0.6 11 -0.6 14 4.7 C11 10 3 10 0 4.7 Z" fill="#dcdcdc"/><circle cx="7" cy="4.3" r="2.6" fill="#4a4a4a"/><circle cx="6.2" cy="3.6" r="0.9" fill="#dcdcdc"/></svg><div class="abs" style="left:35px;top:163px;width:30px;height:26px;background-color:#fff;background-image:linear-gradient(45deg,#ccc 25%,transparent 25%,transparent 75%,#ccc 75%),linear-gradient(45deg,#ccc 25%,transparent 25%,transparent 75%,#ccc 75%);background-size:8px 8px;background-position:0 0,4px 4px;box-shadow:0 0 0 1px #2a2a2a"></div><div class="abs" style="left:51px;top:176px;width:15px;height:14px;background:#2e2e2e"></div><svg style="left:54px;top:178px" width="11" height="11" viewBox="0 0 11 11"><rect x="1.5" y="1.5" width="8" height="8" fill="none" stroke="#e0e0e0" stroke-width="1.1"/><g fill="#e0e0e0"><rect x="0" y="0" width="3" height="3"/><rect x="8" y="0" width="3" height="3"/><rect x="0" y="8" width="3" height="3"/><rect x="8" y="8" width="3" height="3"/></g></svg><span class="t" style="left:75px;top:170px;color:#f0f0f0">椭圆 2 拷贝</span><div class="abs" style="left:0;top:194px;width:227px;height:36px;background:#535353"></div><div class="abs" style="left:30px;top:194px;width:197px;height:36px;background:#535353"></div><div class="abs" style="left:29px;top:194px;width:1px;height:36px;background:#474747"></div><div class="abs" style="left:0;top:230px;width:227px;height:1px;background:#434343"></div><svg style="left:9px;top:209px" width="14" height="10" viewBox="0 0 14 9.4"><path d="M0 4.7 C3 -0.6 11 -0.6 14 4.7 C11 10 3 10 0 4.7 Z" fill="#dcdcdc"/><circle cx="7" cy="4.3" r="2.6" fill="#4a4a4a"/><circle cx="6.2" cy="3.6" r="0.9" fill="#dcdcdc"/></svg><div class="abs" style="left:35px;top:200px;width:30px;height:26px;background-color:#fff;background-image:linear-gradient(45deg,#ccc 25%,transparent 25%,transparent 75%,#ccc 75%),linear-gradient(45deg,#ccc 25%,transparent 25%,transparent 75%,#ccc 75%);background-size:8px 8px;background-position:0 0,4px 4px;box-shadow:0 0 0 1px #2a2a2a"></div><div class="abs" style="left:51px;top:213px;width:15px;height:14px;background:#2e2e2e"></div><svg style="left:54px;top:215px" width="11" height="11" viewBox="0 0 11 11"><rect x="1.5" y="1.5" width="8" height="8" fill="none" stroke="#e0e0e0" stroke-width="1.1"/><g fill="#e0e0e0"><rect x="0" y="0" width="3" height="3"/><rect x="8" y="0" width="3" height="3"/><rect x="0" y="8" width="3" height="3"/><rect x="8" y="8" width="3" height="3"/></g></svg><span class="t" style="left:75px;top:207px;color:#f0f0f0">椭圆 1 拷贝</span><div class="abs" style="left:0;top:231px;width:227px;height:36px;background:#535353"></div><div class="abs" style="left:30px;top:231px;width:197px;height:36px;background:#535353"></div><div class="abs" style="left:29px;top:231px;width:1px;height:36px;background:#474747"></div><div class="abs" style="left:0;top:267px;width:227px;height:1px;background:#434343"></div><svg style="left:9px;top:246px" width="14" height="10" viewBox="0 0 14 9.4"><path d="M0 4.7 C3 -0.6 11 -0.6 14 4.7 C11 10 3 10 0 4.7 Z" fill="#dcdcdc"/><circle cx="7" cy="4.3" r="2.6" fill="#4a4a4a"/><circle cx="6.2" cy="3.6" r="0.9" fill="#dcdcdc"/></svg><div class="abs" style="left:35px;top:237px;width:30px;height:26px;background-color:#fff;background-image:linear-gradient(45deg,#ccc 25%,transparent 25%,transparent 75%,#ccc 75%),linear-gradient(45deg,#ccc 25%,transparent 25%,transparent 75%,#ccc 75%);background-size:8px 8px;background-position:0 0,4px 4px;box-shadow:0 0 0 1px #2a2a2a"></div><div class="abs" style="left:51px;top:250px;width:15px;height:14px;background:#2e2e2e"></div><svg style="left:54px;top:252px" width="11" height="11" viewBox="0 0 11 11"><rect x="1.5" y="1.5" width="8" height="8" fill="none" stroke="#e0e0e0" stroke-width="1.1"/><g fill="#e0e0e0"><rect x="0" y="0" width="3" height="3"/><rect x="8" y="0" width="3" height="3"/><rect x="0" y="8" width="3" height="3"/><rect x="8" y="8" width="3" height="3"/></g></svg><span class="t" style="left:75px;top:244px;color:#f0f0f0">椭圆 2</span><div class="abs" style="left:0;top:268px;width:227px;height:36px;background:#535353"></div><div class="abs" style="left:30px;top:268px;width:197px;height:36px;background:#535353"></div><div class="abs" style="left:29px;top:268px;width:1px;height:36px;background:#474747"></div><div class="abs" style="left:0;top:304px;width:227px;height:1px;background:#434343"></div><svg style="left:9px;top:283px" width="14" height="10" viewBox="0 0 14 9.4"><path d="M0 4.7 C3 -0.6 11 -0.6 14 4.7 C11 10 3 10 0 4.7 Z" fill="#dcdcdc"/><circle cx="7" cy="4.3" r="2.6" fill="#4a4a4a"/><circle cx="6.2" cy="3.6" r="0.9" fill="#dcdcdc"/></svg><div class="abs" style="left:35px;top:274px;width:30px;height:26px;background-color:#fff;background-image:linear-gradient(45deg,#ccc 25%,transparent 25%,transparent 75%,#ccc 75%),linear-gradient(45deg,#ccc 25%,transparent 25%,transparent 75%,#ccc 75%);background-size:8px 8px;background-position:0 0,4px 4px;box-shadow:0 0 0 1px #2a2a2a"></div><div class="abs" style="left:51px;top:287px;width:15px;height:14px;background:#2e2e2e"></div><svg style="left:54px;top:289px" width="11" height="11" viewBox="0 0 11 11"><rect x="1.5" y="1.5" width="8" height="8" fill="none" stroke="#e0e0e0" stroke-width="1.1"/><g fill="#e0e0e0"><rect x="0" y="0" width="3" height="3"/><rect x="8" y="0" width="3" height="3"/><rect x="0" y="8" width="3" height="3"/><rect x="8" y="8" width="3" height="3"/></g></svg><span class="t" style="left:75px;top:281px;color:#f0f0f0">椭圆 1</span><div class="abs" style="left:0;top:305px;width:227px;height:36px;background:#535353"></div><div class="abs" style="left:30px;top:305px;width:197px;height:36px;background:#535353"></div><div class="abs" style="left:29px;top:305px;width:1px;height:36px;background:#474747"></div><div class="abs" style="left:0;top:341px;width:227px;height:1px;background:#434343"></div><svg style="left:9px;top:320px" width="14" height="10" viewBox="0 0 14 9.4"><path d="M0 4.7 C3 -0.6 11 -0.6 14 4.7 C11 10 3 10 0 4.7 Z" fill="#dcdcdc"/><circle cx="7" cy="4.3" r="2.6" fill="#4a4a4a"/><circle cx="6.2" cy="3.6" r="0.9" fill="#dcdcdc"/></svg><div class="abs" style="left:35px;top:311px;width:30px;height:26px;background-color:#fff;background-image:linear-gradient(45deg,#ccc 25%,transparent 25%,transparent 75%,#ccc 75%),linear-gradient(45deg,#ccc 25%,transparent 25%,transparent 75%,#ccc 75%);background-size:8px 8px;background-position:0 0,4px 4px;box-shadow:0 0 0 1px #2a2a2a"></div><svg style="left:44px;top:317px" width="13" height="13" viewBox="0 0 13 13"><path d="M6.5 0.5 L8.3 4.6 L12.5 5 L9.4 8 L10.3 12.3 L6.5 10.2 L2.7 12.3 L3.6 8 L0.5 5 L4.7 4.6 Z" fill="#f4f4ec" stroke="#bcbcbc" stroke-width="0.6"/></svg><span class="t" style="left:75px;top:318px;color:#f0f0f0">图层 1</span><div class="abs" style="left:0;top:342px;width:227px;height:36px;background:#535353"></div><div class="abs" style="left:30px;top:342px;width:197px;height:36px;background:#535353"></div><div class="abs" style="left:29px;top:342px;width:1px;height:36px;background:#474747"></div><div class="abs" style="left:0;top:378px;width:227px;height:1px;background:#434343"></div><svg style="left:9px;top:357px" width="14" height="10" viewBox="0 0 14 9.4"><path d="M0 4.7 C3 -0.6 11 -0.6 14 4.7 C11 10 3 10 0 4.7 Z" fill="#dcdcdc"/><circle cx="7" cy="4.3" r="2.6" fill="#4a4a4a"/><circle cx="6.2" cy="3.6" r="0.9" fill="#dcdcdc"/></svg><div class="abs" style="left:35px;top:348px;width:30px;height:26px;background:#fcfcf5;box-shadow:0 0 0 1px #2a2a2a"></div><svg style="left:201px;top:355px" width="11" height="13" viewBox="0 0 11 13"><rect x="0.7" y="5.2" width="9.6" height="7" fill="none" stroke="#dcdcdc" stroke-width="1.4"/><path d="M2.8 5 V3.4 A2.7 2.7 0 0 1 8.2 3.4 V5" fill="none" stroke="#dcdcdc" stroke-width="1.3"/><rect x="4.6" y="7.6" width="1.8" height="2.4" fill="#dcdcdc"/></svg><span class="t" style="left:75px;top:355px;color:#f0f0f0">背景</span>
  <div class="abs" style="left:227px;top:120px;width:16px;height:259px;background:#4f4f4f"></div>
  <!-- footer -->
  <div class="abs" style="left:0;top:662px;width:243px;height:1px;background:#484848"></div>
  <div class="abs" style="left:0;top:663px;width:243px;height:27px;background:#535353"></div>
  
<svg style="left:41px;top:671px" width="15" height="8" viewBox="0 0 15 8"><rect x="0.7" y="1.2" width="7.6" height="5.6" rx="2.8" fill="none" stroke="#8a8a8a" stroke-width="1.3"/><rect x="6.7" y="1.2" width="7.6" height="5.6" rx="2.8" fill="none" stroke="#8a8a8a" stroke-width="1.3"/><path d="M4.6 4 H10.4" stroke="#8a8a8a" stroke-width="1.3"/></svg>
<span class="t" style="left:69px;top:666px;font-style:italic;font-size:13.5px;line-height:18px;color:#e0e0e0;font-family:'Liberation Sans',sans-serif">fx</span>
<svg style="left:80px;top:682px" width="4" height="3" viewBox="0 0 4 3"><path d="M0 0 H4 L2 3 Z" fill="#e0e0e0"/></svg>
<svg style="left:95px;top:670px" width="14" height="11" viewBox="0 0 14 11"><rect width="14" height="11" fill="#dcdcdc"/><circle cx="7" cy="5.5" r="2.9" fill="#535353"/></svg>
<svg style="left:123px;top:670px" width="13" height="13" viewBox="0 0 12 12"><circle cx="6" cy="6" r="5.2" fill="none" stroke="#dcdcdc" stroke-width="1.4"/><path d="M2.3 9.7 A5.2 5.2 0 0 0 9.7 2.3 Z" fill="#dcdcdc"/></svg>
<svg style="left:134px;top:682px" width="4" height="3" viewBox="0 0 4 3"><path d="M0 0 H4 L2 3 Z" fill="#e0e0e0"/></svg>
<svg style="left:149px;top:670px" width="14" height="11" viewBox="0 0 14 11"><path d="M0 0 H5 L6.4 1.6 H14 V11 H0 Z" fill="#dcdcdc"/><path d="M0 2.6 H14" stroke="#535353" stroke-width="0.8"/></svg>
<svg style="left:177px;top:671px" width="12" height="12" viewBox="0 0 12 12"><path d="M0.7 0.7 H11.3 V11.3 H5 L0.7 7 Z" fill="none" stroke="#dcdcdc" stroke-width="1.4"/><path d="M0.7 7 H5 V11.3" fill="#dcdcdc" stroke="#dcdcdc" stroke-width="0.8"/></svg>
<svg style="left:204px;top:670px" width="12" height="14" viewBox="0 0 12 14"><path d="M0 2.6 H12 M4 2.4 V0.7 H8 V2.4" fill="none" stroke="#dcdcdc" stroke-width="1.4"/><path d="M1.6 4 H10.4 V13.3 H1.6 Z" fill="none" stroke="#dcdcdc" stroke-width="1.4"/><path d="M4.4 5.6 V11.6 M7.6 5.6 V11.6" stroke="#dcdcdc" stroke-width="1.2"/></svg>

</div>
<div class="ln" style="left:1180px;top:69px;width:1px;height:703px;background:#3c3c3c"></div>
<div class="abs" style="left:1181px;top:69px;width:3px;height:703px;background:#585858"></div>
<div class="ln" style="left:1px;top:769px;width:1183px;height:1px;background:#3a3a3a"></div>
<div class="abs" style="left:1px;top:770px;width:1183px;height:2px;background:#505050"></div>
<div class="abs" style="left:0;top:772px;width:1185px;height:2px;background:#000"></div>
<!--R_E-->
</body>
</html>
